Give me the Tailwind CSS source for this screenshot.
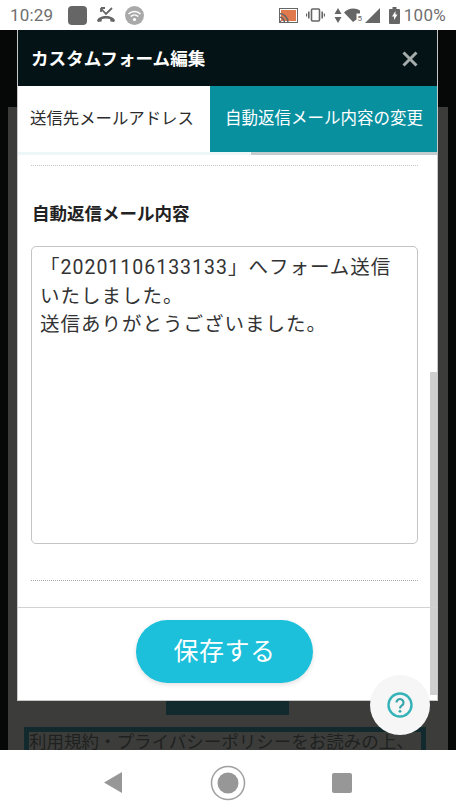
<!DOCTYPE html>
<html lang="ja">
<head>
<meta charset="utf-8">
<script src="https://cdn.jsdelivr.net/npm/@tailwindcss/browser@4"></script>
</head>
<body class="m-0 bg-white">
<div class="w-[456px] h-[812px] flex flex-col overflow-hidden relative font-['Roboto','Noto_Sans_CJK_JP',sans-serif]">
  <!-- status bar -->
  <div class="h-[30px] shrink-0 bg-white flex items-center pl-[10px] pr-[10px] text-[#6f6f6f]">
    <span class="text-[17px] w-[58px] tracking-[0.2px] leading-none">10:29</span>
    <div class="w-[19px] h-[19px] rounded-[4px] bg-[#666666]"></div>
    <svg class="ml-[9px]" width="20" height="18" viewBox="0 0 20 18"><path d="M1 14.500c1-3 4.500-4.500 9-4.500s8 1.500 9 4.500l-1 1.500-3.500-.5-.5-2.500c-2.500-.8-5.500-.8-8 0l-.5 2.500-3.500.5z" fill="#666"/><path d="M4.500 2l5.500 6 6-6M5 2h4M5 2v4" fill="none" stroke="#666" stroke-width="1.800"/></svg>
    <svg class="ml-[9px]" width="19" height="19" viewBox="0 0 19 19"><circle cx="9.500" cy="9.500" r="9.500" fill="#a9a9a9"/><path d="M3.500 8a8.500 8.500 0 0 1 12 0M5.700 10.500a5.500 5.500 0 0 1 7.600 0" fill="none" stroke="#fff" stroke-width="1.600"/><circle cx="9.500" cy="13.500" r="1.600" fill="#fff"/></svg>
    <div class="flex-1"></div>
    <svg width="19" height="15" viewBox="0 0 19 15"><rect x=".5" y=".5" width="18" height="14" fill="#fff" stroke="#666"/><rect x="2" y="2" width="15" height="11" fill="#e07a4c"/><path d="M0 5.500a9 9 0 0 1 9 9M0 9a5.500 5.500 0 0 1 5.500 5.500" fill="none" stroke="#666" stroke-width="1.500"/><path d="M0 12a2.500 2.500 0 0 1 2.500 2.500H0z" fill="#666"/></svg>
    <svg class="ml-[8px]" width="19" height="14" viewBox="0 0 19 14"><rect x="5.500" y="1" width="8" height="12" rx="1" fill="none" stroke="#666" stroke-width="1.600"/><path d="M2.800 3.500v7M16.200 3.500v7" stroke="#666" stroke-width="1.600"/><path d="M.6 5.500v3M18.400 5.500v3" stroke="#666" stroke-width="1.200"/></svg>
    <svg class="ml-[9px]" width="8" height="15" viewBox="0 0 8 15"><path d="M4 0l3.500 6H.5zM4 15L.5 9h7z" fill="#666"/></svg>
    <svg class="ml-[2px]" width="20" height="14" viewBox="0 0 20 14"><path d="M0 4.500C2.500 1.800 5.800.5 9 .5s5 .7 7 2v3h-3.500v6L9 14z" fill="#666"/><text x="13.500" y="13" font-size="8" fill="#666" font-family="Roboto">5</text></svg>
    <svg class="ml-[1px]" width="15" height="15" viewBox="0 0 15 15"><path d="M15 0v15H0z" fill="#666"/></svg>
    <svg class="ml-[9px]" width="11" height="17" viewBox="0 0 11 17"><path d="M3.500 0h4v2H10a1 1 0 0 1 1 1v13a1 1 0 0 1-1 1H1a1 1 0 0 1-1-1V3a1 1 0 0 1 1-1h2.500z" fill="#666"/><path d="M6.500 4L3 9.500h2V13l3.500-5.500h-2z" fill="#fff"/></svg>
    <span class="ml-[4px] text-[17px] leading-none tracking-[0.3px]">100%</span>
  </div>

  <!-- dimmed page -->
  <div class="h-[720px] shrink-0 relative bg-[#050807] overflow-hidden">
    <div class="absolute left-[8px] right-[8px] top-[77px] bottom-0 bg-[#3c3d3b]"></div>
    <div class="absolute left-[166px] top-[660px] w-[123px] h-[25px] bg-[#12292e]"></div>
    <div class="absolute left-[24px] top-[697px] w-[402px] h-[30px] bg-[#3c3d3b] border-[5px] border-b-0 border-[#12292e] text-[#1e2120] text-[17.5px] leading-[21px] whitespace-nowrap overflow-hidden">利用規約・プライバシーポリシーをお読みの上、</div>

    <!-- modal -->
    <div class="absolute left-[17px] top-0 w-[421px] h-[671px] bg-white border-x border-b border-[#c8c8c8] flex flex-col">
      <div class="h-[56px] shrink-0 bg-[#031316] flex items-center justify-between pl-[13px] pr-[19px] pt-[2px]">
        <span class="text-white font-bold text-[17.6px]">カスタムフォーム編集</span>
        <svg width="16" height="16" viewBox="0 0 16 16"><path d="M1.500 1.500l13 13M14.500 1.500l-13 13" stroke="#a6abab" stroke-width="3"/></svg>
      </div>
      <div class="h-[66px] shrink-0 flex">
        <div class="w-[192px] flex items-center pl-[12px] text-[16.4px] text-[#2b2b2b] whitespace-nowrap">送信先メールアドレス</div>
        <div class="flex-1 bg-[#09909f] flex items-center pl-[15px] text-[16.5px] text-white whitespace-nowrap">自動返信メール内容の変更</div>
      </div>
      <div class="h-[3px] shrink-0 flex">
        <div class="w-[233px] bg-[#eef7f8]"></div>
        <div class="flex-1 bg-[#c3ccce]"></div>
      </div>
      <div class="flex-1 relative pl-[13px] pr-[19px] pt-[10px] min-h-0">
        <div class="border-t border-dotted border-[#c4c4c4]"></div>
        <div class="mt-[37px] font-bold text-[17.5px] leading-[22px] text-[#222] pl-[1px]">自動返信メール内容</div>
        <div class="mt-[21px] h-[298px] border border-[#c4c4c4] rounded-[5px] pl-[8px] pr-[6px] pt-[7px] text-[19.5px] tracking-[1px] leading-[28.5px] text-[#333]">「20201106133133」へフォーム送信いたしました。<br>送信ありがとうございました。</div>
        <div class="mt-[36px] border-t border-dotted border-[#aaa]"></div>
        <div class="absolute right-0 top-[217px] bottom-0 w-[7px] bg-[#cfcfcf]"></div>
      </div>
      <div class="h-[93px] shrink-0 relative flex justify-center pt-[12px] pr-[6px] bg-white border-t border-[#d2d2d2]">
        <div class="w-[177px] h-[63px] rounded-full bg-[#1cc0da] shadow-[0_2px_5px_rgba(0,0,0,0.12)] flex items-center justify-center text-white text-[25px] tracking-[0.5px]">保存する</div>
        <div class="absolute right-0 top-0 bottom-[5px] w-[7px] bg-[#cfcfcf]"></div>
      </div>
    </div>
  </div>

  <!-- navigation bar -->
  <div class="flex-1 bg-white flex items-center pl-[104px] pt-[3px]">
    <svg width="18" height="21" viewBox="0 0 18 21"><path d="M18 0v21L0 10.500z" fill="#979797"/></svg>
    <svg class="ml-[88px]" width="36" height="36" viewBox="0 0 36 36"><circle cx="18" cy="18" r="16.500" fill="none" stroke="#a0a0a0" stroke-width="1.500"/><circle cx="18" cy="18" r="10.500" fill="#979797"/></svg>
    <div class="ml-[86px] w-[20px] h-[20px] rounded-[2px] bg-[#979797]"></div>
  </div>

  <!-- help -->
  <div class="absolute left-[370px] top-[675px] w-[60px] h-[60px] rounded-full bg-[#f6f6f6] flex items-center justify-center">
    <svg width="26" height="26" viewBox="0 0 26 26"><circle cx="13" cy="13" r="11.500" fill="none" stroke="#36b3b8" stroke-width="2.400"/><path d="M9.500 10.500a3.500 3.500 0 1 1 5.500 2.900c-1.300.9-2 1.400-2 3" fill="none" stroke="#36a5aa" stroke-width="2.200"/><circle cx="13" cy="19.300" r="1.400" fill="#36a5aa"/></svg>
  </div>
</div>
</body>
</html>
